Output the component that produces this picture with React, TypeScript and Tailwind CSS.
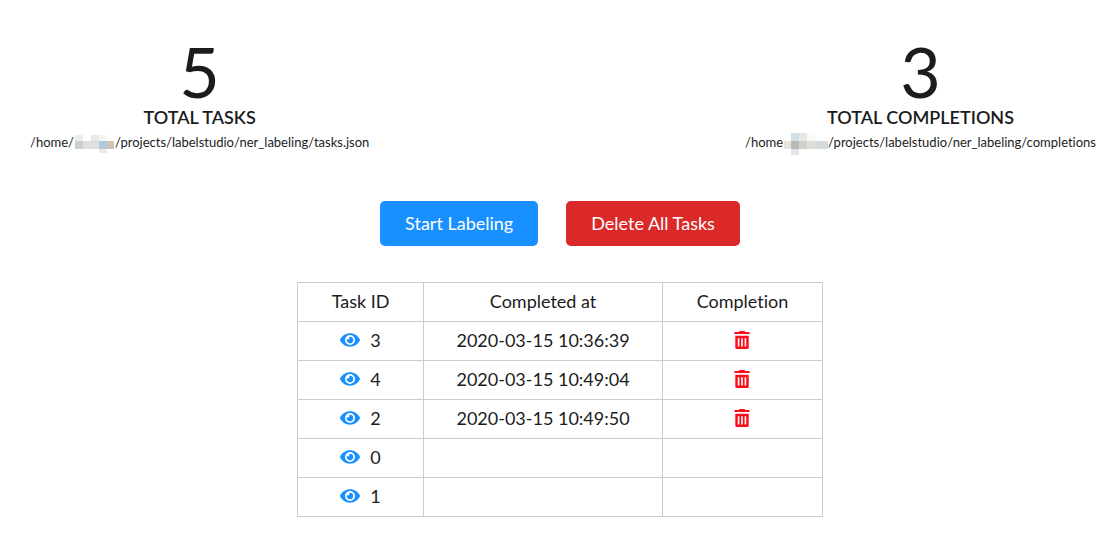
import type { ReactNode } from "react";
import { FaEye } from "react-icons/fa";

interface Task {
  id: number;
  completedAt?: string;
}

const tasks: Task[] = [
  { id: 3, completedAt: "2020-03-15 10:36:39" },
  { id: 4, completedAt: "2020-03-15 10:49:04" },
  { id: 2, completedAt: "2020-03-15 10:49:50" },
  { id: 0 },
  { id: 1 },
];

// Pixelated user names in the paths
const TasksMask = () => (
  <svg width="41" height="22" viewBox="0 0 41 22" className="-my-1 inline-block align-middle" shapeRendering="crispEdges" aria-hidden="true">
    <path fill="#ededeb" d="M1 2h8v6H1z" />
    <path fill="#e8e8e8" d="M17 2h8v6h-8z" />
    <path fill="#f4f4f3" d="M25 2h8v6h-8z" />
    <path fill="#c8d3cd" d="M1 8h8v8H1z" />
    <path fill="#dfe0dc" d="M9 8h16v8H9z" />
    <path fill="#b3c8d8" d="M25 8h8v8h-8z" />
    <path fill="#cfc3ba" d="M33 8h7v8h-7z" />
    <path fill="#ebebeb" d="M25 16h8v4h-8z" />
  </svg>
);

const CompletionsMask = () => (
  <svg width="45" height="22" viewBox="0 0 45 22" className="-my-1 inline-block align-middle" shapeRendering="crispEdges" aria-hidden="true">
    <path fill="#d3dfe6" d="M8 0h8v8H8z" />
    <path fill="#e3e8e9" d="M16 0h8v8h-8z" />
    <path fill="#fcf8f3" d="M24 0h8v8h-8z" />
    <path fill="#e4e3e0" d="M1 8h7v8H1z" />
    <path fill="#b9b9b3" d="M8 8h8v8H8z" />
    <path fill="#d0d0ca" d="M16 8h8v8h-8z" />
    <path fill="#dedfda" d="M24 8h8v8h-8z" />
    <path fill="#d3dcdc" d="M32 8h8v8h-8z" />
    <path fill="#dcdcd6" d="M40 8h5v8h-5z" />
    <path fill="#dde6ec" d="M8 16h8v6H8z" />
  </svg>
);

const TrashIcon = () => (
  <svg width="16" height="18" viewBox="0 0 16 18" fill="#fb0d1b" aria-hidden="true">
    <path d="M5.5 0h5l.8 1H15a.6.6 0 0 1 .6.6V3H.4V1.600A.6.6 0 0 1 1 1h3.700z" />
    <path fillRule="evenodd" d="M1.300 4.800h13.400V16.500a1.500 1.500 0 0 1-1.500 1.500H2.800a1.500 1.500 0 0 1-1.500-1.500zM3.800 7.300v8.200h1.600V7.300zM7.200 7.300v8.200h1.600V7.300zM10.600 7.300v8.200h1.600V7.300z" />
  </svg>
);

const Stat = ({ value, label, children }: { value: number; label: string; children: ReactNode }) => (
  <div className="text-center">
    <div className="text-[70px] leading-[72px]">{value}</div>
    <div className="text-lg leading-5 font-semibold uppercase">{label}</div>
    <div className="mt-1 text-[13px] leading-[22px] whitespace-nowrap">{children}</div>
  </div>
);

export default function App() {
  return (
    <main className="bg-white pt-[35px] pb-10 font-['Lato',sans-serif] text-[#1b1c1d] [font-variant-ligatures:none]">
      <section className="flex justify-between pr-5 pl-[30px]">
        <Stat value={5} label="Total tasks">
          /home/<TasksMask />/projects/labelstudio/ner_labeling/tasks.json
        </Stat>
        <Stat value={3} label="Total completions">
          /home<CompletionsMask />/projects/labelstudio/ner_labeling/completions
        </Stat>
      </section>

      <div className="mt-12 flex justify-center gap-7 pl-1 text-lg text-white">
        <button type="button" className="h-[45px] rounded-[5px] bg-[#1890ff] px-[25px] pb-0.5">
          Start Labeling
        </button>
        <button type="button" className="h-[45px] rounded-[5px] bg-[#db2828] px-[25px] pb-0.5">
          Delete All Tasks
        </button>
      </div>

      <div className="mt-9 flex justify-center pl-1">
        <table className="border-collapse text-center text-lg">
          <thead>
            <tr className="h-[39px]">
              <th className="border border-[#cccccc] px-[34px] pb-0.5 font-normal">Task ID</th>
              <th className="border border-[#cccccc] px-8 pb-0.5 font-normal">Completed at</th>
              <th className="border border-[#cccccc] px-[34px] pb-0.5 font-normal">Completion</th>
            </tr>
          </thead>
          <tbody>
            {tasks.map((task) => (
              <tr key={task.id} className="h-[39px]">
                <td className="border border-[#cccccc] pb-0.5">
                  <a href={`#task-${task.id}`} className="flex items-center justify-center gap-2.5">
                    <FaEye className="size-5 text-[#1890ff]" />
                    {task.id}
                  </a>
                </td>
                <td className="border border-[#cccccc] px-8 pb-0.5">{task.completedAt}</td>
                <td className="border border-[#cccccc] pb-0.5">
                  {task.completedAt && (
                    <button type="button" aria-label={`Delete completion ${task.id}`} className="mx-auto block">
                      <TrashIcon />
                    </button>
                  )}
                </td>
              </tr>
            ))}
          </tbody>
        </table>
      </div>
    </main>
  );
}
